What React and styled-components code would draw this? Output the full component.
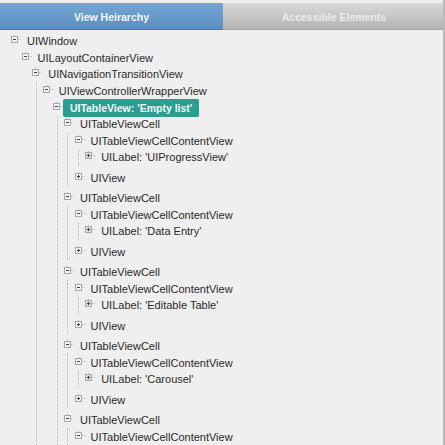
import React from 'react';
import styled, { createGlobalStyle } from 'styled-components';

const GlobalStyle = createGlobalStyle`
  html, body {
    margin: 0;
    padding: 0;
    background: #ffffff;
    font-family: "Liberation Sans", Arial, sans-serif;
  }
`;

const Page = styled.div`
  width: 445px;
  height: 445px;
  overflow: hidden;
  padding-top: 3px;
  box-sizing: border-box;
  background: #efefef;
  border-right: 2px solid #b9b9b9;
`;

const Tabs = styled.div`
  display: flex;
  height: 27px;
  margin-right: -2px;
`;

const Tab = styled.div`
  display: flex;
  align-items: center;
  justify-content: center;
  padding-top: 1px;
  font-size: 10.5px;
  font-weight: 700;
  color: ${({ $active }) => ($active ? '#f4f8fc' : '#ececec')};
  width: ${({ $active }) => ($active ? '223px' : '222px')};
  background: ${({ $active }) =>
    $active ? 'linear-gradient(#74a6d6, #5c8dbe)' : 'linear-gradient(#d9d9d9, #b3b3b3)'};
  border-bottom: 1px solid ${({ $active }) => ($active ? '#4f7aa6' : '#a3a3a3')};
  box-sizing: border-box;
`;

const Tree = styled.div`
  padding: 3px 0 0 11px;
`;

const Row = styled.div`
  display: flex;
  align-items: center;
  height: 16.6px;
  margin-top: ${({ $gap }) => ($gap ? '4.2px' : '0')};
  margin-bottom: ${({ $gap }) => ($gap ? '3.4px' : '0')};
  font-size: 11px;
  color: #2a2a2a;
  white-space: nowrap;
`;

const Toggle = styled.svg`
  flex: none;
  width: 10px;
  height: 9px;
  margin: -3px 6px 0 0;
`;

const Label = styled.span`
  ${({ $selected }) =>
    $selected &&
    `
    margin-left: -6px;
    padding: 0 6.5px;
    height: 18px;
    line-height: 18px;
    font-size: 10.5px;
    color: #f2fbf8;
    font-weight: 700;
    background: #2b9e90;
    border-radius: 2px;
  `}
`;

const Children = styled.div`
  margin-left: 3.5px;
  padding-left: 6.1px;
  border-left: 1px dotted ${({ $guide }) => ($guide ? '#bdbdbd' : 'transparent')};
`;

const cell = (label) => ({
  label: 'UITableViewCell',
  guide: true,
  children: label
    ? [
        {
          label: 'UITableViewCellContentView',
          guide: true,
          children: [{ label, plus: true, inner: true }],
        },
        { label: 'UIView', plus: true, gap: true },
      ]
    : [{ label: 'UITableViewCellContentView' }],
});

const tree = {
  label: 'UIWindow',
  children: [
    {
      label: 'UILayoutContainerView',
      children: [
        {
          label: 'UINavigationTransitionView',
          guide: true,
          children: [
            {
              label: 'UIViewControllerWrapperView',
              children: [
                {
                  label: "UITableView: 'Empty list'",
                  selected: true,
                  guide: true,
                  children: [
                    cell("UILabel: 'UIProgressView'"),
                    cell("UILabel: 'Data Entry'"),
                    cell("UILabel: 'Editable Table'"),
                    cell("UILabel: 'Carousel'"),
                    cell(),
                  ],
                },
              ],
            },
          ],
        },
      ],
    },
  ],
};

const ToggleIcon = ({ plus, inner }) => (
  <Toggle viewBox="0 0 10 9">
    <path d="M3.5 0V1M7 4.5H10" stroke="#bbb" strokeWidth="1" strokeDasharray="1 1" fill="none" />
    <rect x="0.5" y="1.5" width="6" height="6" fill={inner ? '#ddd' : '#f4f4f4'} stroke="#a8a8a8" />
    <path d={plus ? 'M2 4.5H5M3.5 3V6' : 'M2 4.5H5'} stroke="#444" strokeWidth="1" fill="none" />
  </Toggle>
);

const Node = ({ node }) => (
  <>
    <Row $gap={node.gap}>
      <ToggleIcon plus={node.plus} inner={node.inner} />
      <Label $selected={node.selected}>{node.label}</Label>
    </Row>
    {node.children && (
      <Children $guide={node.guide}>
        {node.children.map((child, i) => (
          <Node key={i} node={child} />
        ))}
      </Children>
    )}
  </>
);

export default function App() {
  return (
    <>
      <GlobalStyle />
      <Page>
        <Tabs>
          <Tab $active>View Heirarchy</Tab>
          <Tab>Accessible Elements</Tab>
        </Tabs>
        <Tree>
          <Node node={tree} />
        </Tree>
      </Page>
    </>
  );
}
